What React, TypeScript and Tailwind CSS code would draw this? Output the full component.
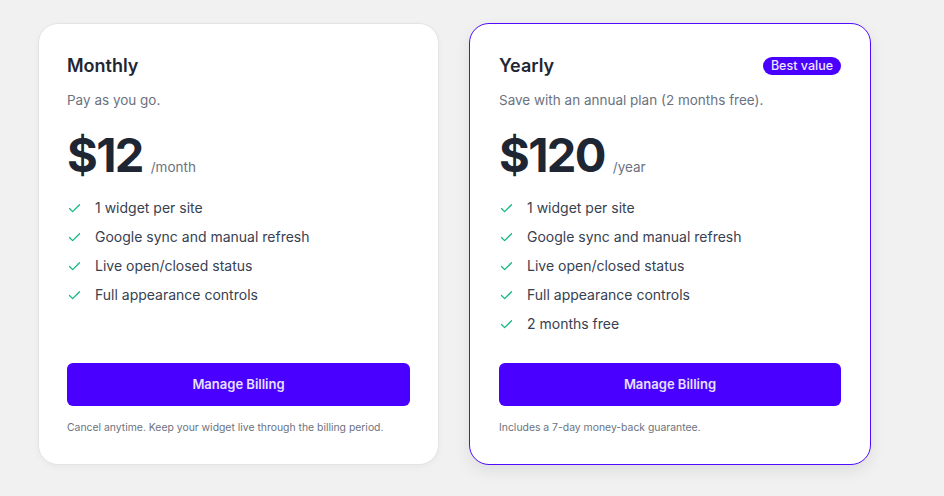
import { Check } from 'lucide-react';

type Plan = {
  name: string;
  blurb: string;
  price: string;
  unit: string;
  features: string[];
  note: string;
  featured?: boolean;
};

const plans: Plan[] = [
  {
    name: 'Monthly',
    blurb: 'Pay as you go.',
    price: '$12',
    unit: '/month',
    features: ['1 widget per site', 'Google sync and manual refresh', 'Live open/closed status', 'Full appearance controls'],
    note: 'Cancel anytime. Keep your widget live through the billing period.',
  },
  {
    name: 'Yearly',
    blurb: 'Save with an annual plan (2 months free).',
    price: '$120',
    unit: '/year',
    features: [
      '1 widget per site',
      'Google sync and manual refresh',
      'Live open/closed status',
      'Full appearance controls',
      '2 months free',
    ],
    note: 'Includes a 7-day money-back guarantee.',
    featured: true,
  },
];

function PlanCard({ plan }: { plan: Plan }) {
  return (
    <div
      className={
        plan.featured
          ? 'flex flex-col rounded-[20px] border border-[#4f0cff] bg-white px-[29px] pt-[28px] pb-[28px] shadow-[0_6px_16px_rgba(0,0,0,0.08)]'
          : 'flex flex-col rounded-[20px] border border-[#e4e4e7] bg-white px-[28px] pt-[28px] pb-[28px] shadow-[0_2px_6px_rgba(0,0,0,0.04)]'
      }
    >
      <div className="flex items-center justify-between">
        <h2 className="text-[18px] leading-7 font-semibold text-[#1f2633]">{plan.name}</h2>
        {plan.featured && (
          <span className="rounded-full bg-[#4a00ff] px-[8px] text-[12.5px] leading-[18px] font-medium text-[#ece8ff]">
            Best value
          </span>
        )}
      </div>
      <p className="mt-[10px] text-[13.5px] leading-5 text-[#6b7280]">{plan.blurb}</p>
      <div className="mt-[21px] flex items-baseline gap-[8px]">
        <span className="text-[47px] leading-none font-bold tracking-[-0.035em] text-[#1f2633]">{plan.price}</span>
        <span className="text-[13.5px] text-[#6b7280]">{plan.unit}</span>
      </div>
      <ul className="mt-[20px] mb-[29px] flex flex-col gap-[9px]">
        {plan.features.map((f) => (
          <li key={f} className="flex items-center gap-[13px] text-[14px] leading-5 text-[#374151]">
            <Check className="h-[15px] w-[15px] text-[#10b981]" strokeWidth={2} />
            {f}
          </li>
        ))}
      </ul>
      <button className="mt-auto h-[43px] w-full rounded-[6px] bg-[#4a00ff] text-[13px] font-semibold text-[#e6e0ff]">
        Manage Billing
      </button>
      <p className="mt-[14px] text-[10.4px] leading-4 text-[#6b7280]">{plan.note}</p>
    </div>
  );
}

export default function App() {
  return (
    <div
      className="min-h-screen bg-[#f1f1f1] px-[38px] pt-[23px]"
      style={{ fontFamily: 'Inter, "Noto Sans", sans-serif' }}
    >
      <div className="grid grid-cols-[401px_402px] gap-[30px]">
        {plans.map((p) => (
          <PlanCard key={p.name} plan={p} />
        ))}
      </div>
    </div>
  );
}
